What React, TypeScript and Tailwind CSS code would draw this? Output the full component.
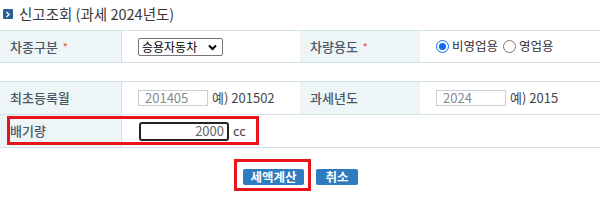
import { ReactNode } from 'react';

const font = { fontFamily: '"Noto Sans CJK KR", "Noto Sans", sans-serif' };

function Label({ children, required }: { children: ReactNode; required?: boolean }) {
  return (
    <div className="flex items-center bg-[#eef5f7] pl-[10px] text-[13px] font-medium text-[#4a5866]">
      {children}
      {required && <span className="ml-[5px] text-[10px] text-[#e5533d]">*</span>}
    </div>
  );
}

function TextBox({ value, width }: { value: string; width: string }) {
  return (
    <div className={`flex h-[16px] items-center border border-[#c9cfd4] bg-white pl-[6px] text-[13px] text-[#858a8f] ${width}`}>
      {value}
    </div>
  );
}

export default function App() {
  return (
    <div className="h-[205px] w-[600px] bg-white text-[#333]" style={font}>
      {/* title */}
      <div className="flex h-[30px] items-center pb-[2px] pl-[3px]">
        <span className="mr-[6px] flex h-[10px] w-[10px] items-center justify-center rounded-[1px] bg-[#2c5f93]">
          <svg width="6" height="7" viewBox="0 0 6 7">
            <path d="M1.5 1 L4 3.5 L1.5 6" stroke="white" strokeWidth="1.4" fill="none" />
          </svg>
        </span>
        <span className="text-[14.5px] text-[#3a3a3a]">신고조회 (과세 2024년도)</span>
      </div>

      {/* table 1 */}
      <div className="grid h-[33px] grid-cols-[121px_179px_120px_1fr] border-y border-[#d3e2e7]">
        <Label required>차종구분</Label>
        <div className="flex items-center border-l border-[#d3e2e7] pl-[16px]">
          <div className="relative flex h-[18px] w-[85px] items-center rounded-[2px] border border-[#767676] pl-[3px] text-[12px] text-black">
            승용자동차
            <svg className="absolute right-[5px] top-[5px]" width="9" height="7" viewBox="0 0 9 7">
              <path d="M1 1.5 L4.5 5 L8 1.5" stroke="black" strokeWidth="2" fill="none" />
            </svg>
          </div>
        </div>
        <Label required>차량용도</Label>
        <div className="flex items-center gap-[3px] pl-[16px] text-[12.5px] text-[#333]">
          <span className="flex h-[13px] w-[13px] items-center justify-center rounded-full border border-[#0a6cf5]">
            <span className="h-[7px] w-[7px] rounded-full bg-[#0a6cf5]" />
          </span>
          <span>비영업용</span>
          <span className="ml-[2px] h-[13px] w-[13px] rounded-full border border-[#767676]" />
          <span>영업용</span>
        </div>
      </div>

      {/* table 2 */}
      <div className="mt-[18px] border-y border-[#d3e2e7]">
        <div className="grid h-[33px] grid-cols-[121px_179px_120px_1fr] border-b border-[#d3e2e7]">
          <Label>최초등록월</Label>
          <div className="flex items-center border-l border-[#d3e2e7] pl-[16px] text-[13px] text-[#444]">
            <TextBox value="201405" width="w-[70px]" />
            <span className="ml-[4px]">예) 201502</span>
          </div>
          <Label>과세년도</Label>
          <div className="flex items-center pl-[16px] text-[13px] text-[#444]">
            <TextBox value="2024" width="w-[70px]" />
            <span className="ml-[4px]">예) 2015</span>
          </div>
        </div>
        <div className="relative grid h-[32px] grid-cols-[121px_1fr]">
          <Label>배기량</Label>
          <div className="flex items-center border-l border-[#d3e2e7] pl-[17px] text-[13px] text-[#444]">
            <div className="flex h-[19px] w-[90px] items-center justify-end rounded-[3px] border-2 border-[#222] pr-[3px] text-[#666]">
              2000
            </div>
            <span className="ml-[4px]">cc</span>
          </div>
          <div className="pointer-events-none absolute left-[7px] top-[1px] h-[29px] w-[252px] border-[3px] border-[#e8141b]" />
        </div>
      </div>

      {/* buttons */}
      <div className="mt-[21px] flex justify-center gap-[12px] pl-[1px]">
        <div className="relative">
          <button className="flex h-[16px] w-[61px] items-center justify-center rounded-[2px] bg-[#2e7bbf] text-[12.5px] font-bold text-white">
            세액계산
          </button>
          <div className="pointer-events-none absolute -left-[9px] -right-[7px] -top-[10px] -bottom-[6px] border-[3px] border-[#e8141b]" />
        </div>
        <button className="flex h-[16px] w-[42px] items-center justify-center rounded-[2px] bg-[#2e7bbf] text-[12.5px] font-bold text-white">
          취소
        </button>
      </div>
    </div>
  );
}
